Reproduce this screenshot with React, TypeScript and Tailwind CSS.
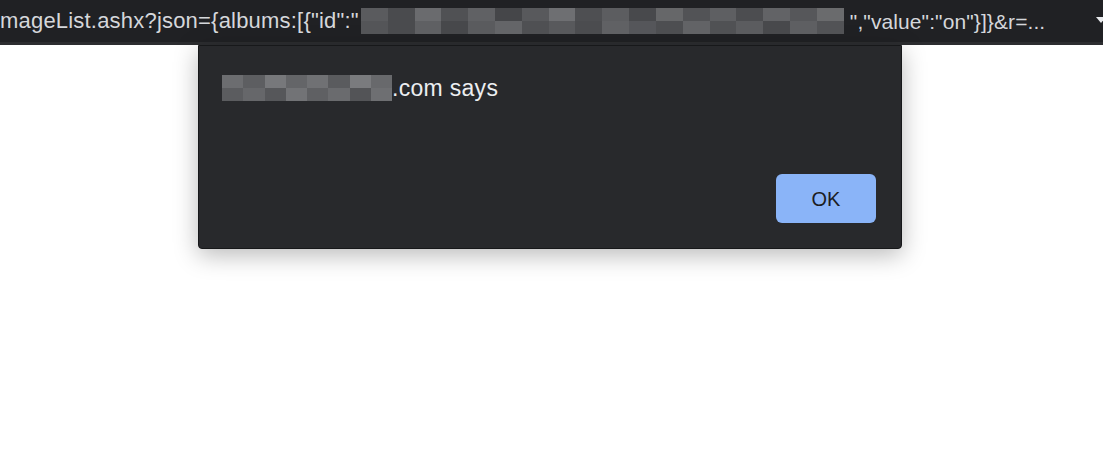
const urlBlocks = ['#5a5b5e', '#4a4b4e', '#6a6b6e', '#505154', '#606164', '#454649', '#58595c', '#6e6f72', '#4e4f52', '#5c5d60', '#48494c', '#666769', '#525356', '#5e5f62', '#4c4d50', '#626366', '#56575a', '#6a6b6d']
const urlBlocks2 = ['#545558', '#4a4b4e', '#5f6063', '#47484b', '#5a5b5e', '#646568', '#4f5053', '#58595c', '#4b4c4f', '#606164', '#55565a', '#4d4e51', '#626366', '#505154', '#5b5c5f', '#48494c', '#5e5f62', '#525356']
const titleBlocks = ['#6c6d70', '#5d5e61', '#77787b', '#646568', '#707174', '#5a5b5e', '#7a7b7e', '#68696c']
const titleBlocks2 = ['#5b5c5f', '#66676a', '#56575a', '#727376', '#5f6063', '#6a6b6e', '#535457', '#6e6f72']

function Pixelated({ top, bottom, className }: { top: string[]; bottom: string[]; className: string }) {
  return (
    <span className={`inline-flex flex-col align-middle ${className}`}>
      <span className="flex flex-1">
        {top.map((c, i) => (
          <span key={i} className="flex-1" style={{ background: c }} />
        ))}
      </span>
      <span className="flex flex-1">
        {bottom.map((c, i) => (
          <span key={i} className="flex-1" style={{ background: c }} />
        ))}
      </span>
    </span>
  )
}

export default function App() {
  return (
    <div className="w-[1103px] h-[469px] bg-white overflow-hidden" style={{ fontFamily: '"Liberation Sans", Arial, sans-serif' }}>
      <div className="h-[42px] bg-[#202124] flex items-center justify-between overflow-hidden">
        <div className="flex items-center whitespace-nowrap text-[#d5d7db] leading-none">
          <span className="text-[22px] tracking-[0.2px]">mageList.ashx?json={'{'}albums:[{'{'}"id":"</span>
          <Pixelated top={urlBlocks} bottom={urlBlocks2} className="w-[483px] h-[26px] mx-[2px]" />
          <span className="text-[21px] tracking-[0.1px] ml-[4px]">","value":"on"{'}'}]{'}'}&amp;r=...</span>
        </div>
        <svg width="10" height="10" viewBox="0 0 10 10" className="mr-[-3px] mb-[2px]">
          <path d="M0 2 L10 2 L5 8 Z" fill="#e8eaed" />
        </svg>
      </div>
      <div className="h-[3px] bg-[#2c2d30]" />
      <div className="ml-[198px] w-[704px] h-[204px] bg-[#28292c] border border-[#17181a] rounded-b-[4px] shadow-[0_6px_24px_rgba(0,0,0,0.28)] flex flex-col justify-between pl-[23px] pr-[25px] pt-[29px] pb-[25px]">
        <div className="flex items-center text-[23px] tracking-[0.3px] text-[#eceef1] leading-none">
          <Pixelated top={titleBlocks} bottom={titleBlocks2} className="w-[170px] h-[26px]" />
          <span>.com says</span>
        </div>
        <div className="flex justify-end">
          <button className="w-[100px] h-[49px] rounded-[6px] bg-[#8ab4f8] text-[#1c1d22] text-[20px] flex items-center justify-center">
            OK
          </button>
        </div>
      </div>
    </div>
  )
}
